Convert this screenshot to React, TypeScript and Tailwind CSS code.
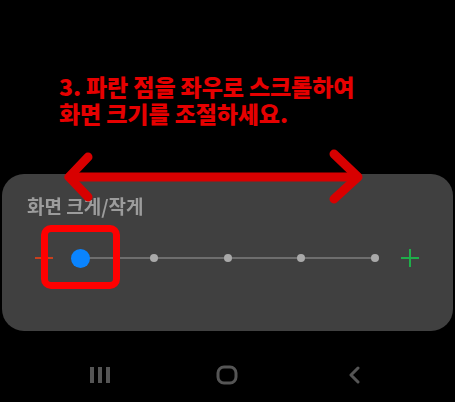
import React from "react";

const font = { fontFamily: '"Noto Sans CJK KR", "Noto Sans", sans-serif' };

const stops = [0, 1, 2, 3, 4];

export default function App() {
  return (
    <div
      className="relative w-[455px] h-[402px] bg-black overflow-hidden"
      style={font}
    >
      {/* Instruction */}
      <div className="h-[174px] pt-[73px] pl-[59px] text-[23px] leading-[27px] font-black text-[#e60000] tracking-[-0.1px]">
        <p>3. 파란 점을 좌우로 스크롤하여</p>
        <p>화면 크기를 조절하세요.</p>
      </div>

      {/* Panel */}
      <div className="relative mx-[2px] h-[157px] rounded-[22px] bg-[#404040]">
        <div className="pl-[25px] pt-[20px] text-[19px] leading-[24px] font-bold text-[#9c9c9c] blur-[0.6px]">
          화면 크게/작게
        </div>

        {/* Slider row */}
        <div className="mt-[30px] h-[20px] flex items-center pl-[33px]">
          <div className="w-[18px] h-[2px] bg-[#c8401e]" />
          <div className="relative ml-[17px] w-[315px] h-[20px] flex justify-between items-center">
            <div className="absolute left-[10px] right-[10px] top-[9px] h-[2px] bg-[#6e6e6e]" />
            {stops.map((i) => (
              <div key={i} className="relative w-[20px] h-[20px] flex items-center justify-center">
                {i === 0 ? (
                  <div className="w-[19px] h-[19px] rounded-full bg-[#0a84ff]" />
                ) : (
                  <div className="w-[8px] h-[8px] rounded-full bg-[#a9a9a9]" />
                )}
              </div>
            ))}
          </div>
          <svg className="ml-[16px]" width="18" height="18" viewBox="0 0 18 18">
            <path d="M9 0 V18 M0 9 H18" stroke="#1fae4a" strokeWidth="2" />
          </svg>
        </div>

        {/* Highlight box */}
        <div className="absolute left-[39px] top-[51px] w-[79px] h-[64px] rounded-[10px] border-[7px] border-[#ff0000]" />
      </div>

      {/* Nav bar */}
      <div className="h-[71px] flex items-center pl-[80px] pt-[16px] gap-[87px] blur-[0.6px]">
        <div className="w-[40px] flex justify-center">
          <svg width="22" height="18" viewBox="0 0 22 18">
            <rect x="1" y="1" width="4" height="16" fill="#555" />
            <rect x="9" y="1" width="4" height="16" fill="#555" />
            <rect x="17" y="1" width="4" height="16" fill="#555" />
          </svg>
        </div>
        <div className="w-[40px] flex justify-center">
          <svg width="22" height="20" viewBox="0 0 22 20">
            <rect x="2" y="2" width="18" height="16" rx="6" fill="none" stroke="#555" strokeWidth="3" />
          </svg>
        </div>
        <div className="w-[40px] flex justify-center">
          <svg width="14" height="20" viewBox="0 0 14 20">
            <path d="M11 3 L4 10 L11 17" fill="none" stroke="#555" strokeWidth="3" strokeLinecap="round" strokeLinejoin="round" />
          </svg>
        </div>
      </div>

      {/* Double arrow annotation */}
      <svg
        className="absolute left-0 top-0 pointer-events-none"
        width="455"
        height="402"
        viewBox="0 0 455 402"
      >
        <g fill="none" stroke="#d80000" strokeWidth="9" strokeLinecap="round" strokeLinejoin="round">
          <path d="M70 177 L357 177" />
          <path d="M88 157 L69 177 L88 197" />
          <path d="M334 154 L358 177 L334 199" />
        </g>
      </svg>
    </div>
  );
}
